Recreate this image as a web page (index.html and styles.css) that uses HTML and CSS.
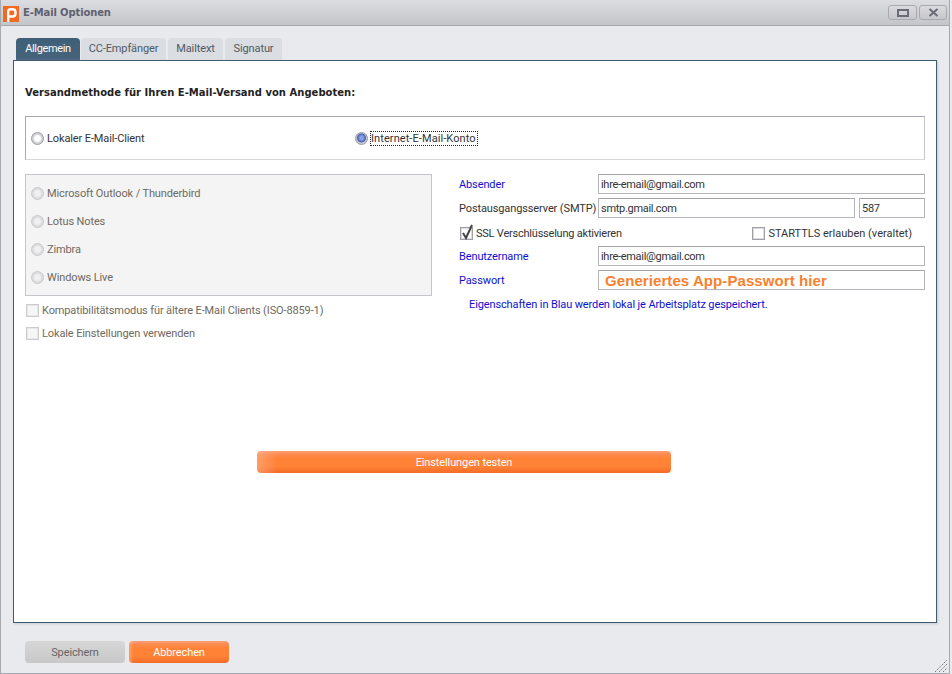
FILE: index.html
```html
<!DOCTYPE html>
<html lang="de">
<head>
<meta charset="utf-8">
<title>E-Mail Optionen</title>
<link rel="stylesheet" href="styles.css">
</head>
<body>
<div class="window">
  <header class="titlebar">
    <svg class="logo" width="16" height="16" viewBox="0 0 16 16"><rect width="16" height="16" fill="#f26a21"/><path d="M5.200 16V5.500Q5.200 3.200 7.500 3.200H9.500Q12.500 3.200 12.500 6.200V7.500Q12.500 10.500 9.500 10.500H6" fill="none" stroke="#fff" stroke-width="2.400"/></svg>
    <span class="title">E-Mail Optionen</span>
    <div class="winbtns">
      <span class="winbtn"><svg width="12" height="8" viewBox="0 0 12 8"><path d="M1 1h10v6H1z" fill="none" stroke="#6b6b78" stroke-width="2"/></svg></span>
      <span class="winbtn"><svg width="11" height="9" viewBox="0 0 11 9"><path d="M1.500 1l8 7M9.500 1l-8 7" fill="none" stroke="#6b6b78" stroke-width="2"/></svg></span>
    </div>
  </header>
  <div class="content">
    <nav class="tabs">
      <span class="tab active">Allgemein</span>
      <span class="tab t2">CC-Empfänger</span>
      <span class="tab t3">Mailtext</span>
      <span class="tab t4">Signatur</span>
    </nav>
    <main class="panel">
      <h2 class="heading">Versandmethode für Ihren E-Mail-Versand von Angeboten:</h2>
      <section class="methods">
        <label class="opt m1"><i class="radio"></i><span>Lokaler E-Mail-Client</span></label>
        <label class="opt"><i class="radio on"></i><span class="focus">Internet-E-Mail-Konto</span></label>
      </section>
      <div class="cols">
        <div class="left">
          <div class="clients">
            <label class="opt dis"><i class="radio off"></i><span>Microsoft Outlook / Thunderbird</span></label>
            <label class="opt dis"><i class="radio off"></i><span>Lotus Notes</span></label>
            <label class="opt dis"><i class="radio off"></i><span>Zimbra</span></label>
            <label class="opt dis"><i class="radio off"></i><span>Windows Live</span></label>
          </div>
          <label class="chk dis c1"><i class="box off"></i><span>Kompatibilitätsmodus für ältere E-Mail Clients (ISO-8859-1)</span></label>
          <label class="chk dis c2"><i class="box off"></i><span>Lokale Einstellungen verwenden</span></label>
        </div>
        <div class="right">
          <div class="row"><span class="lbl blue">Absender</span><span class="input grow">ihre-email@gmail.com</span></div>
          <div class="row"><span class="lbl">Postausgangsserver (SMTP)</span><span class="input grow">smtp.gmail.com</span><span class="input port">587</span></div>
          <div class="row checks">
            <label class="chk ssl"><i class="box"><svg width="16" height="16" viewBox="0 0 16 16"><path d="M3 9l3 5L12 1" fill="none" stroke="#444" stroke-width="2"/></svg></i><span>SSL Verschlüsselung aktivieren</span></label>
            <label class="chk tls"><i class="box"></i><span>STARTTLS erlauben (veraltet)</span></label>
          </div>
          <div class="row"><span class="lbl blue">Benutzername</span><span class="input grow">ihre-email@gmail.com</span></div>
          <div class="row"><span class="lbl blue">Passwort</span><span class="input grow pw">Generiertes App-Passwort hier</span></div>
          <p class="note">Eigenschaften in Blau werden lokal je Arbeitsplatz gespeichert.</p>
        </div>
      </div>
      <button class="btn orange test">Einstellungen testen</button>
    </main>
    <footer class="footer">
      <button class="btn grey small">Speichern</button>
      <button class="btn orange small">Abbrechen</button>
    </footer>
    <svg class="grip" width="14" height="14" viewBox="0 0 14 14"><path d="M1 13L13 1M5 13l8-8M9 13l4-4" stroke="#777" stroke-width="1" stroke-dasharray="1.500 1"/></svg>
  </div>
</div>
</body>
</html>
```
FILE: styles.css
```css
* { box-sizing: border-box; }
html, body { margin: 0; padding: 0; }
body { width: 952px; height: 674px; overflow: hidden; background: #e9eaee; font-family: Roboto, sans-serif; font-size: 11px; letter-spacing: -.12px; color: #333; }
.window { width: 950px; height: 674px; border: 1px solid #a8aab2; border-top: 0; display: flex; flex-direction: column; background: #e9eaee; }
.titlebar { height: 26px; flex: none; display: flex; align-items: center; padding: 0 2px 0 2px; background: linear-gradient(#dcdde0, #c4c5ca); border-bottom: 1px solid #a6a7ad; }
.logo { margin-right: 4px; margin-top: 2px; }
.title { font-family: "DejaVu Sans", sans-serif; letter-spacing: -.13px; font-weight: bold; color: #5f6070; font-size: 10px; }
.winbtns { margin-left: auto; display: flex; gap: 2px; }
.winbtn { width: 29px; height: 15px; border: 1px solid #a9a9b0; border-radius: 3px; display: flex; align-items: center; justify-content: center; background: linear-gradient(#dadade, #c6c7cc); }
.winbtn:last-child { width: 28px; }
.content { flex: 1; position: relative; padding: 12px 12px 0; display: flex; flex-direction: column; }
.tabs { display: flex; height: 22px; padding-left: 3px; gap: 1px; flex: none; }
.tab { height: 22px; padding-top: 3px; background: #dadde1; border-radius: 4px 4px 0 0; text-align: center; color: #4f5a64; line-height: 16px; }
.tab.active { width: 64px; background: linear-gradient(#3f5f78, #46647c); color: #fff; letter-spacing: -.35px; }
.t2 { width: 85px; }
.t3 { width: 55px; margin-left: 1px; }
.t4 { width: 57px; margin-left: 1px; }
.panel { width: 924px; height: 563px; border: 1px solid #3f5d72; background: #fff; padding: 0 11px; display: flex; flex-direction: column; box-shadow: 1px 1px 2px #c8c9cf; }
.heading { margin: 25px 0 0; height: 14px; line-height: 14px; font-family: "DejaVu Sans", sans-serif; letter-spacing: .02px; font-size: 10px; font-weight: bold; color: #222; }
.methods { margin-top: 16px; height: 44px; border: 1px solid #a8a8b0; border-bottom-color: #d8d8dc; border-right-color: #c8c8cc; display: flex; align-items: center; padding-left: 5px; }
.m1 { width: 324px; }
.opt { display: flex; align-items: center; gap: 3px; height: 16px; }
.radio { width: 13px; height: 13px; flex: none; border-radius: 50%; border: 1px solid #9a9ba2; background: radial-gradient(circle, #fff 0, #fff 38%, #cfd0d6 55%, #dcdde1 100%); }
.radio.on { background: radial-gradient(circle at 50% 45%, #8aa0e0 20%, #4a64b4 50%, #c8cad0 60%); }
.radio.off { border-color: #c8c8cc; background: radial-gradient(circle, #f0f0f0 0, #f0f0f0 38%, #dcdcdf 55%, #e6e6e8 100%); }
.focus { outline: 1px dotted #222; outline-offset: 0; color: #333; padding: 0 1px 0 0; letter-spacing: .08px; }
.cols { display: flex; margin-top: 14px; }
.left { width: 407px; }
.clients { height: 122px; border: 1px solid #c4c6cc; background: #f4f4f4; padding: 10px 0 0 5px; display: flex; flex-direction: column; gap: 12px; }
.dis { color: #6e6a60; }
.chk { display: flex; align-items: center; gap: 3px; height: 16px; }
.box { width: 13px; height: 13px; flex: none; border: 1px solid #a0a0a8; background: #fff; box-shadow: inset 0 0 0 1px #dcdce0; position: relative; display: block; }
.box svg { position: absolute; left: -1px; top: -4px; }
.box.off { border-color: #ccccd0; background: #f6f6f6; box-shadow: inset 0 0 0 1px #e8e8ea; }
.c1 { margin: 6px 0 0 1px; }
.c2 { margin: 7px 0 0 1px; }
.right { width: 467px; margin-left: 26px; display: flex; flex-direction: column; }
.row { display: flex; gap: 4px; height: 20px; margin-bottom: 4px; align-items: center; }
.lbl { width: 136px; flex: none; padding-left: 1px; color: #333; white-space: nowrap; }
.blue { color: #1010d0; }
.input { height: 20px; border: 1px solid #b4b4ba; border-top-color: #a4a4aa; background: #fff; padding: 1px 0 0 2px; line-height: 18px; color: #333; letter-spacing: -.3px; }
.grow { flex: 1; }
.port { width: 66px; flex: none; }
.pw { color: #f7812e; font-weight: bold; font-family: "Liberation Sans", sans-serif; font-size: 15px; letter-spacing: .08px; padding: 0 0 0 6px; line-height: 20px; }
.checks { height: 16px; margin: 3px 0 5px; justify-content: space-between; }
.ssl { margin-left: 2px; letter-spacing: -.22px; }
.tls { margin-right: 13px; letter-spacing: 0; }
.note { margin: 4px 0 0 11px; color: #1010d0; line-height: 14px; }
.btn { display: block; border: 0; padding: 0; font: inherit; letter-spacing: inherit; border-radius: 4px; color: #fff; text-align: center; }
.orange { background: linear-gradient(90deg, rgba(255,190,160,.45), rgba(255,190,160,0) 5%), linear-gradient(#fba07c 0, #fd8c50 14%, #ff8236 35%, #ff8236 70%, #f36c28 100%); }
.grey { background: linear-gradient(#d6d6d6, #c8c8c8); color: #666; }
.test { width: 414px; height: 22px; margin: 110px 0 0 232px; }
.footer { display: flex; gap: 4px; padding: 18px 0 0 12px; }
.small { width: 100px; height: 22px; }
.grip { position: absolute; right: 1px; bottom: 0; }
```
